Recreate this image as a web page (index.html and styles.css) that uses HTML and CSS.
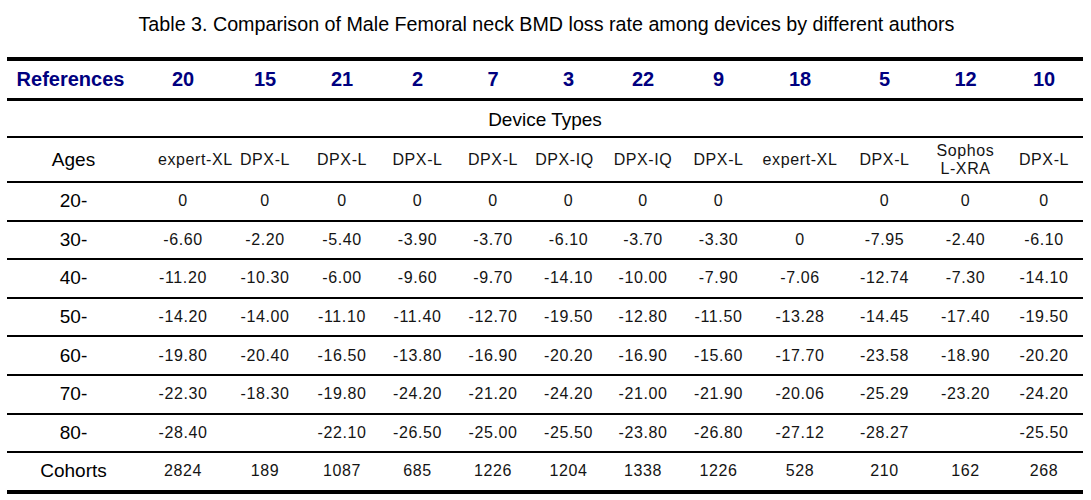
FILE: index.html
```html
<!DOCTYPE html>
<html lang="en">
<head>
<meta charset="utf-8">
<title>Table 3</title>
<link rel="stylesheet" href="styles.css">
</head>
<body>
<p class="caption">Table 3. Comparison of Male Femoral neck BMD loss rate among devices by different authors</p>
<table class="bmd">
  <colgroup>
    <col class="c0"><col class="c1"><col class="c2"><col class="c3"><col class="c4"><col class="c5"><col class="c6"><col class="c7"><col class="c8"><col class="c9"><col class="c10"><col class="c11"><col class="c12">
  </colgroup>
  <thead>
    <tr class="refs">
      <th>References</th><th>20</th><th>15</th><th>21</th><th>2</th><th>7</th><th>3</th><th>22</th><th>9</th><th>18</th><th>5</th><th>12</th><th>10</th>
    </tr>
    <tr class="devtypes">
      <th colspan="13">Device Types</th>
    </tr>
    <tr class="devices">
      <th class="lab">Ages</th>
      <td class="shift">expert-XL</td><td>DPX-L</td><td>DPX-L</td><td>DPX-L</td><td>DPX-L</td><td class="shiftl">DPX-IQ</td><td>DPX-IQ</td><td>DPX-L</td><td>expert-XL</td><td>DPX-L</td><td class="two">Sophos<br>L-XRA</td><td>DPX-L</td>
    </tr>
  </thead>
  <tbody>
    <tr><th class="lab">20-</th><td>0</td><td>0</td><td>0</td><td>0</td><td>0</td><td>0</td><td>0</td><td>0</td><td></td><td>0</td><td>0</td><td>0</td></tr>
    <tr><th class="lab">30-</th><td>-6.60</td><td>-2.20</td><td>-5.40</td><td>-3.90</td><td>-3.70</td><td>-6.10</td><td>-3.70</td><td>-3.30</td><td>0</td><td>-7.95</td><td>-2.40</td><td>-6.10</td></tr>
    <tr><th class="lab">40-</th><td>-11.20</td><td>-10.30</td><td>-6.00</td><td>-9.60</td><td>-9.70</td><td>-14.10</td><td>-10.00</td><td>-7.90</td><td>-7.06</td><td>-12.74</td><td>-7.30</td><td>-14.10</td></tr>
    <tr><th class="lab">50-</th><td>-14.20</td><td>-14.00</td><td>-11.10</td><td>-11.40</td><td>-12.70</td><td>-19.50</td><td>-12.80</td><td>-11.50</td><td>-13.28</td><td>-14.45</td><td>-17.40</td><td>-19.50</td></tr>
    <tr><th class="lab">60-</th><td>-19.80</td><td>-20.40</td><td>-16.50</td><td>-13.80</td><td>-16.90</td><td>-20.20</td><td>-16.90</td><td>-15.60</td><td>-17.70</td><td>-23.58</td><td>-18.90</td><td>-20.20</td></tr>
    <tr><th class="lab">70-</th><td>-22.30</td><td>-18.30</td><td>-19.80</td><td>-24.20</td><td>-21.20</td><td>-24.20</td><td>-21.00</td><td>-21.90</td><td>-20.06</td><td>-25.29</td><td>-23.20</td><td>-24.20</td></tr>
    <tr><th class="lab">80-</th><td>-28.40</td><td></td><td>-22.10</td><td>-26.50</td><td>-25.00</td><td>-25.50</td><td>-23.80</td><td>-26.80</td><td>-27.12</td><td>-28.27</td><td></td><td>-25.50</td></tr>
    <tr class="last"><th class="lab">Cohorts</th><td>2824</td><td>189</td><td>1087</td><td>685</td><td>1226</td><td>1204</td><td>1338</td><td>1226</td><td>528</td><td>210</td><td>162</td><td>268</td></tr>
  </tbody>
</table>
</body>
</html>
```

FILE: styles.css
```css
html, body {
  margin: 0;
  padding: 0;
  background: #ffffff;
}

body {
  font-family: "Liberation Sans", Arial, sans-serif;
  color: #000000;
}

.caption {
  margin: 0;
  padding-top: 12px;
  height: 57px;
  box-sizing: border-box;
  text-align: center;
  font-size: 19.7px;
  line-height: 24px;
  padding-left: 2px;
}

.bmd {
  margin-left: 7px;
  width: 1076px;
  table-layout: fixed;
  border-collapse: separate;
  border-spacing: 0;
  border-top: 4px solid #000;
}

.c0 { width: 133px; }
.c1 { width: 86px; }
.c2 { width: 78px; }
.c3 { width: 76px; }
.c4 { width: 75px; }
.c5 { width: 76px; }
.c6 { width: 75px; }
.c7 { width: 74px; }
.c8 { width: 77px; }
.c9 { width: 86px; }
.c10 { width: 83px; }
.c11 { width: 79px; }
.c12 { width: 78px; }

.bmd th,
.bmd td {
  box-sizing: border-box;
  padding: 0;
  text-align: center;
  vertical-align: middle;
  white-space: nowrap;
  border-bottom: 2px solid #000;
}

.refs th {
  height: 40px;
  border-bottom: 3px solid #000;
  font-size: 20px;
  font-weight: bold;
  color: #00007f;
}

.refs th:first-child {
  padding-right: 6px;
}

.devtypes th {
  height: 37px;
  font-size: 19px;
  font-weight: normal;
  padding-top: 2px;
}

.devices th,
.devices td {
  height: 45px;
}

.bmd tbody th,
.bmd tbody td {
  height: 38.6px;
}

.lab {
  font-size: 19px;
  font-weight: normal;
  color: #000;
}

.bmd td {
  font-size: 16px;
  letter-spacing: 0.6px;
  color: #141414;
  line-height: 18px;
}

.bmd .shift {
  padding-left: 18px;
}

.bmd .shiftl {
  padding-right: 8px;
}

.bmd .two {
  padding-top: 1px;
}

.bmd .last th,
.bmd .last td {
  border-bottom: 4px solid #000;
  height: 40.6px;
}
```
